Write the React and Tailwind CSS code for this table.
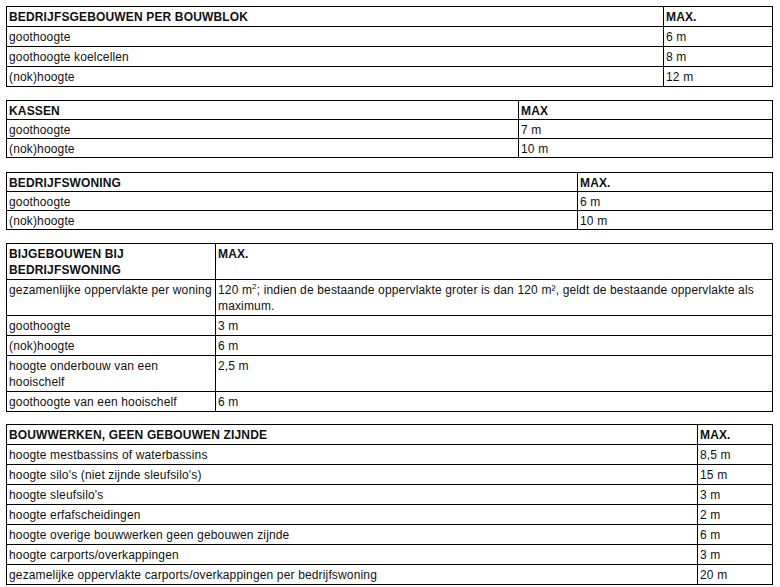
import React from "react";

function T({ split, head, max, rows, className = "", tight = false }) {
  const cellCls =
    "border border-black align-top pl-[2px] pr-[2px] pt-[2px] leading-[16px] " +
    (tight ? "pb-0" : "pb-[1px]");
  return (
    <table className={"table-fixed border-collapse w-[767px] " + className}>
      <colgroup>
        <col style={{ width: split }} />
        <col />
      </colgroup>
      <tbody>
        <tr>
          <td className={cellCls + " font-bold"}>{head}</td>
          <td className={cellCls + " font-bold"}>{max}</td>
        </tr>
        {rows.map((r, i) => (
          <tr key={i}>
            <td className={cellCls}>{r[0]}</td>
            <td className={cellCls}>{r[1]}</td>
          </tr>
        ))}
      </tbody>
    </table>
  );
}

export default function App() {
  return (
    <div
      className="bg-white w-[780px] h-[587px] overflow-hidden pl-[6px] pt-[6px] text-[12px] tracking-[0.15px] text-[#111]"
      style={{ fontFamily: '"Liberation Sans", Arial, sans-serif' }}
    >
      <T
        split="657px"
        head="BEDRIJFSGEBOUWEN PER BOUWBLOK"
        max="MAX."
        rows={[
          ["goothoogte", "6 m"],
          ["goothoogte koelcellen", "8 m"],
          ["(nok)hoogte", "12 m"],
        ]}
      />
      <T
        className="mt-[13px]"
        tight
        split="512px"
        head="KASSEN"
        max="MAX"
        rows={[
          ["goothoogte", "7 m"],
          ["(nok)hoogte", "10 m"],
        ]}
      />
      <T
        className="mt-[14px]"
        tight
        split="571px"
        head="BEDRIJFSWONING"
        max="MAX."
        rows={[
          ["goothoogte", "6 m"],
          ["(nok)hoogte", "10 m"],
        ]}
      />
      <T
        className="mt-[13px]"
        split="209px"
        head={<>BIJGEBOUWEN BIJ<br />BEDRIJFSWONING</>}
        max="MAX."
        rows={[
          [
            "gezamenlijke oppervlakte per woning",
            <>
              120 m<span className="relative -top-[5px] text-[8px] leading-none">2</span>; indien de bestaande oppervlakte groter is dan 120 m², geldt de bestaande oppervlakte als maximum.
            </>,
          ],
          ["goothoogte", "3 m"],
          ["(nok)hoogte", "6 m"],
          ["hoogte onderbouw van een hooischelf", "2,5 m"],
          ["goothoogte van een hooischelf", "6 m"],
        ]}
      />
      <T
        className="mt-[12px]"
        split="691px"
        head="BOUWWERKEN, GEEN GEBOUWEN ZIJNDE"
        max="MAX."
        rows={[
          ["hoogte mestbassins of waterbassins", "8,5 m"],
          ["hoogte silo's (niet zijnde sleufsilo's)", "15 m"],
          ["hoogte sleufsilo's", "3 m"],
          ["hoogte erfafscheidingen", "2 m"],
          ["hoogte overige bouwwerken geen gebouwen zijnde", "6 m"],
          ["hoogte carports/overkappingen", "3 m"],
          ["gezamelijke oppervlakte carports/overkappingen per bedrijfswoning", "20 m"],
        ]}
      />
    </div>
  );
}
